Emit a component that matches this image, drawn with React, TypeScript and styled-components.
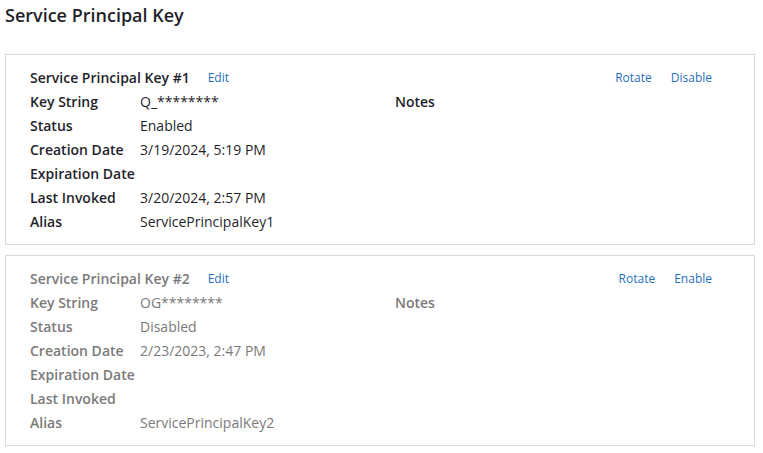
import React from "react";
import styled, { createGlobalStyle } from "styled-components";

const GlobalStyle = createGlobalStyle`
  body {
    margin: 0;
    font-family: "Open Sans", "Liberation Sans", sans-serif;
    color: #1f1f2b;
    background: #ffffff;
  }
`;

const Page = styled.div`
  padding: 0 8px 0 5px;
`;

const PageTitle = styled.h1`
  margin: 0 0 24px;
  font-size: 18px;
  line-height: 30px;
  font-weight: 600;
`;

const CardList = styled.div`
  display: flex;
  flex-direction: column;
  gap: 10px;
`;

const Card = styled.section<{ $disabled?: boolean }>`
  border: 1px solid #d9d9d9;
  padding: 11px 42px 10px 24px;
  font-size: 14px;
  line-height: 24px;
  color: ${(p) => (p.$disabled ? "#7a7a7a" : "#1f1f2b")};
`;

const HeaderRow = styled.div`
  display: flex;
  align-items: center;
`;

const CardTitle = styled.h2`
  margin: 0 18px 0 0;
  font-size: 14px;
  font-weight: 600;
  line-height: 24px;
`;

const LinkButton = styled.a`
  font-size: 12px;
  color: #1f6fbf;
  text-decoration: none;
  cursor: pointer;
`;

const Actions = styled.div`
  margin-left: auto;
  display: flex;
  gap: 19px;
`;

const Body = styled.div`
  display: flex;
`;

const Fields = styled.dl`
  margin: 0;
  width: 365px;
  display: grid;
  grid-template-columns: 110px 1fr;
  grid-auto-rows: 24px;
`;

const Label = styled.dt`
  font-weight: 600;
`;

const Value = styled.dd`
  margin: 0;
`;

const Notes = styled.div`
  font-weight: 600;
`;

interface KeyInfo {
  name: string;
  keyString: string;
  status: string;
  created: string;
  expires: string;
  lastInvoked: string;
  alias: string;
  enabled: boolean;
}

const keys: KeyInfo[] = [
  {
    name: "Service Principal Key #1",
    keyString: "Q_********",
    status: "Enabled",
    created: "3/19/2024, 5:19 PM",
    expires: "",
    lastInvoked: "3/20/2024, 2:57 PM",
    alias: "ServicePrincipalKey1",
    enabled: true,
  },
  {
    name: "Service Principal Key #2",
    keyString: "OG********",
    status: "Disabled",
    created: "2/23/2023, 2:47 PM",
    expires: "",
    lastInvoked: "",
    alias: "ServicePrincipalKey2",
    enabled: false,
  },
];

const KeyCard: React.FC<{ info: KeyInfo }> = ({ info }) => {
  const rows: [string, string][] = [
    ["Key String", info.keyString],
    ["Status", info.status],
    ["Creation Date", info.created],
    ["Expiration Date", info.expires],
    ["Last Invoked", info.lastInvoked],
    ["Alias", info.alias],
  ];

  return (
    <Card $disabled={!info.enabled}>
      <HeaderRow>
        <CardTitle>{info.name}</CardTitle>
        <LinkButton>Edit</LinkButton>
        <Actions>
          <LinkButton>Rotate</LinkButton>
          <LinkButton>{info.enabled ? "Disable" : "Enable"}</LinkButton>
        </Actions>
      </HeaderRow>
      <Body>
        <Fields>
          {rows.map(([label, value]) => (
            <React.Fragment key={label}>
              <Label>{label}</Label>
              <Value>{value}</Value>
            </React.Fragment>
          ))}
        </Fields>
        <Notes>Notes</Notes>
      </Body>
    </Card>
  );
};

export default function App() {
  return (
    <Page>
      <GlobalStyle />
      <PageTitle>Service Principal Key</PageTitle>
      <CardList>
        {keys.map((k) => (
          <KeyCard key={k.name} info={k} />
        ))}
      </CardList>
    </Page>
  );
}
